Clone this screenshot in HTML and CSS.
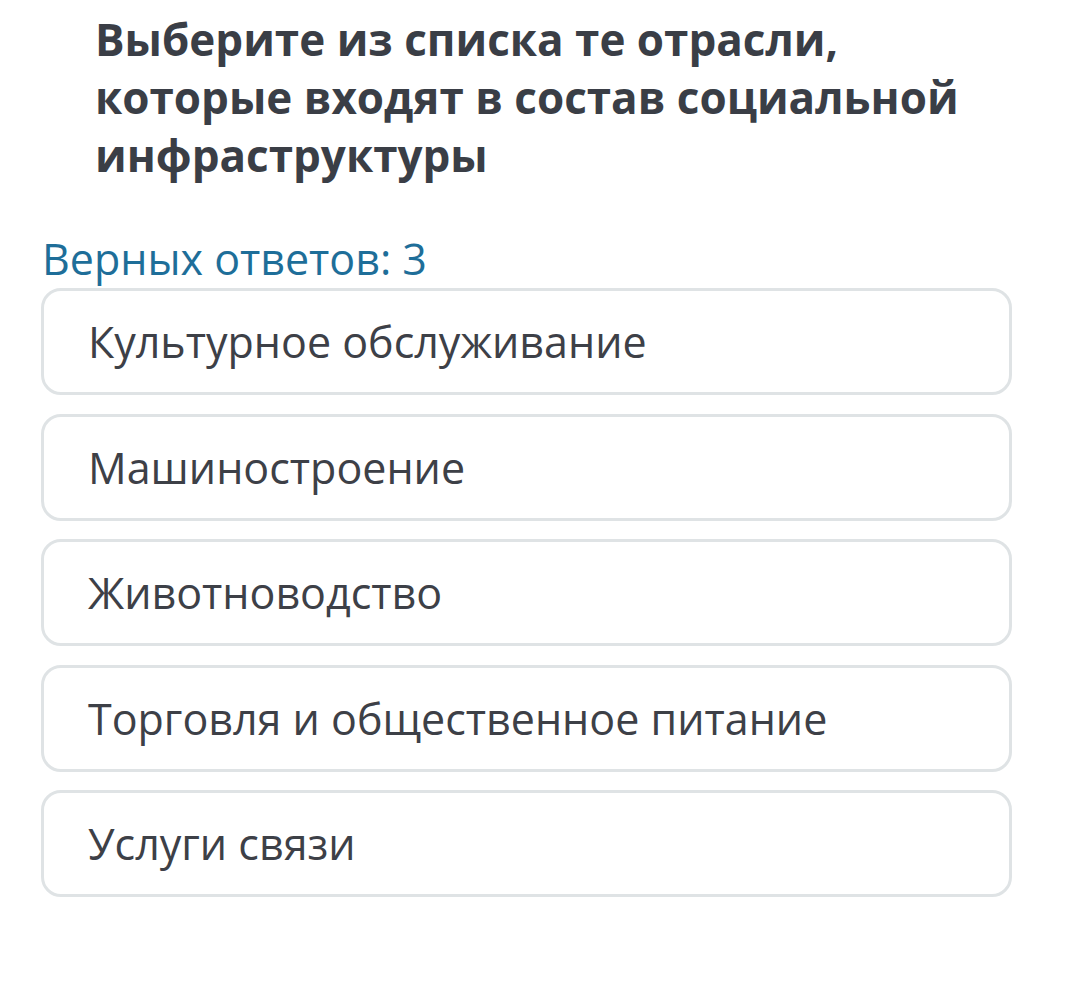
FILE: index.html
```html
<!DOCTYPE html>
<html lang="ru">
<head>
<meta charset="utf-8">
<link rel="stylesheet" href="styles.css">
</head>
<body>
<div class="page">
  <h1 class="question">Выберите из списка те отрасли, которые входят в состав социальной инфраструктуры</h1>
  <div class="hint">Верных ответов: 3</div>
  <div class="options">
    <div class="option">Культурное обслуживание</div>
    <div class="option">Машиностроение</div>
    <div class="option">Животноводство</div>
    <div class="option">Торговля и общественное питание</div>
    <div class="option">Услуги связи</div>
  </div>
</div>
</body>
</html>
```
FILE: styles.css
```css
html, body {
  margin: 0;
  padding: 0;
  background: #ffffff;
}
body {
  font-family: "Open Sans", "Noto Sans", sans-serif;
}
.page {
  width: 1067px;
  padding: 10px 0 0 0;
}
.question {
  margin: 0 0 0 95px;
  width: 880px;
  font-size: 44px;
  line-height: 58px;
  font-weight: 700;
  color: #3a3e46;
}
.hint {
  margin: 51px 0 0 42px;
  font-size: 43px;
  line-height: 48px;
  color: #1e6e99;
}
.options {
  margin: 5px 0 0 41px;
  width: 971px;
  display: flex;
  flex-direction: column;
  gap: 18.5px;
}
.option {
  box-sizing: border-box;
  height: 107px;
  border: 3px solid #dfe3e5;
  border-radius: 20px;
  padding: 0 0 0 44px;
  display: flex;
  align-items: center;
  font-size: 43px;
  color: #3d4047;
}
```
